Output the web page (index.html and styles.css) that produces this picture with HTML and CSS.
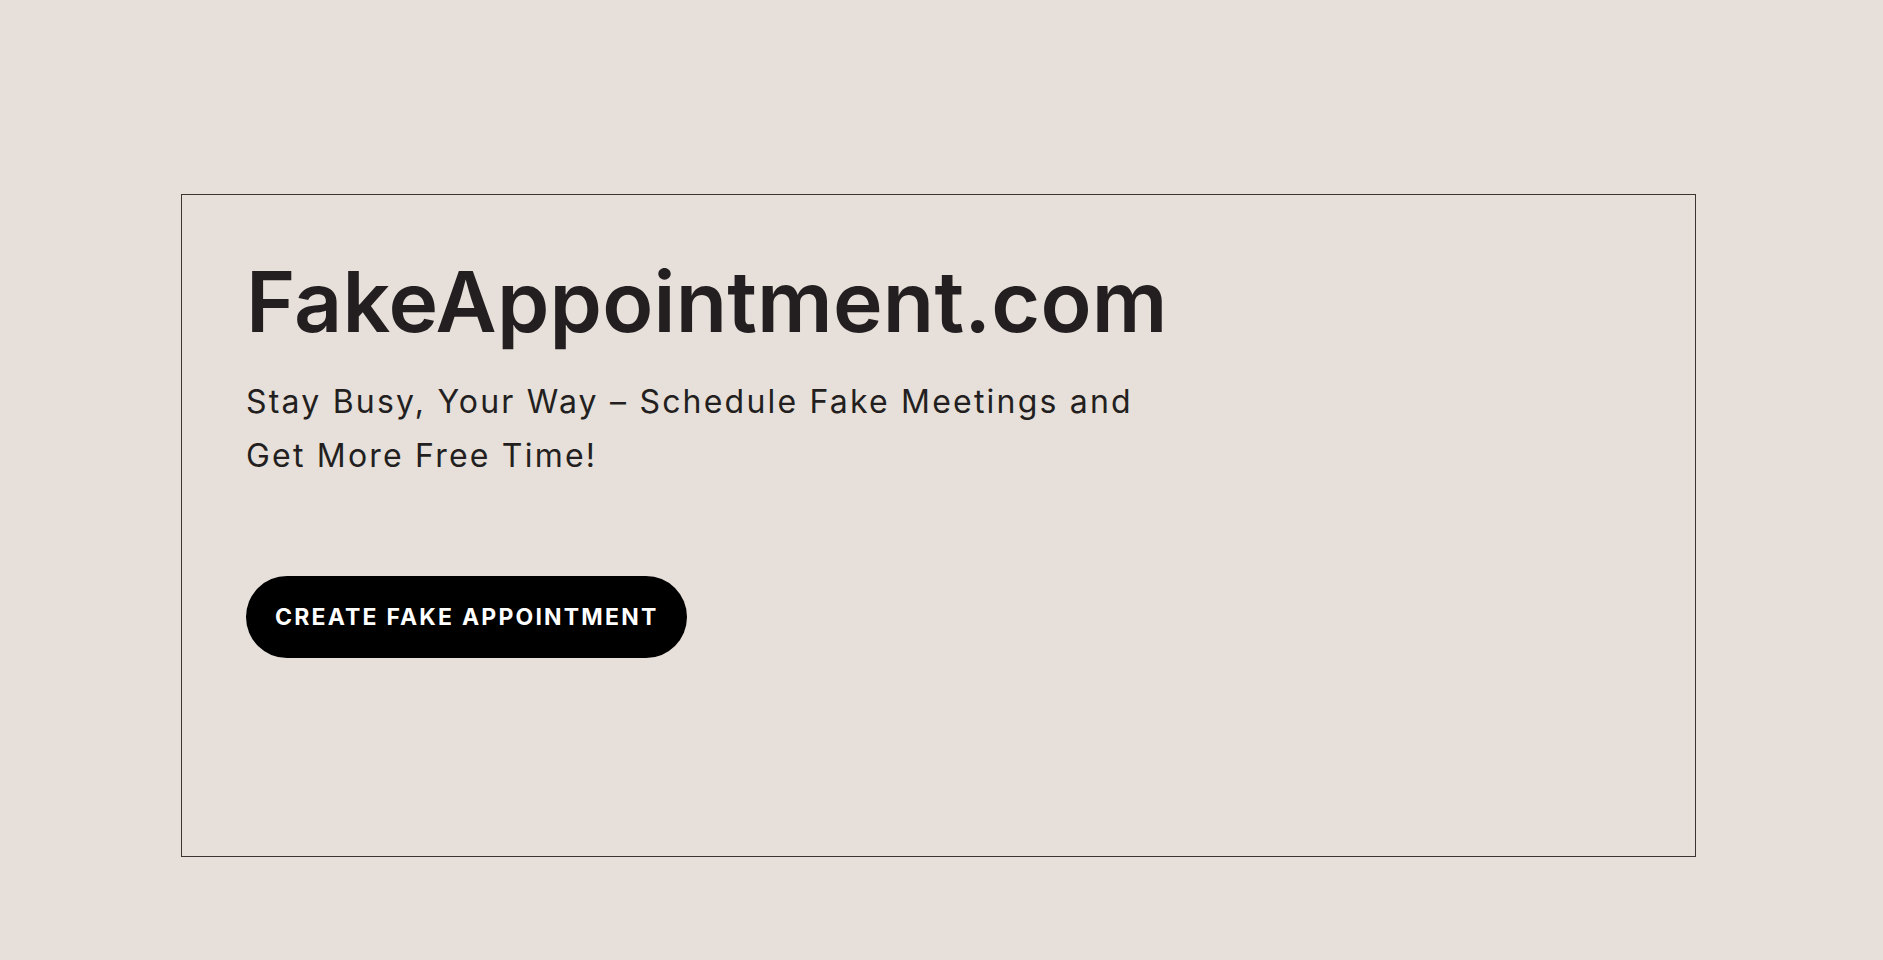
FILE: index.html
```html
<!DOCTYPE html>
<html lang="en">
<head>
<meta charset="utf-8">
<title>FakeAppointment.com</title>
<link rel="stylesheet" href="styles.css">
</head>
<body>
<main class="page">
  <section class="hero">
    <h1 class="hero-title">FakeAppointment.com</h1>
    <p class="hero-sub">Stay Busy, Your Way – Schedule Fake Meetings and Get More Free Time!</p>
    <a class="hero-btn" href="#">CREATE FAKE APPOINTMENT</a>
  </section>
</main>
</body>
</html>
```
FILE: styles.css
```css
html, body {
  margin: 0;
  padding: 0;
  background: #e7dfd9;
}
body {
  font-family: Inter, "Noto Sans", sans-serif;
  color: #231f20;
}
.page {
  padding: 194px 187px 0 181px;
}
.hero {
  border: 1px solid #3a3433;
  padding: 57px 64px 198px 64px;
  display: flex;
  flex-direction: column;
  align-items: flex-start;
}
.hero-title {
  margin: 0;
  font-size: 84px;
  line-height: 1.2;
  font-weight: 600;
  letter-spacing: 0.2px;
}
.hero-sub {
  margin: 22px 0 0 0;
  max-width: 910px;
  font-size: 32px;
  line-height: 54px;
  font-weight: 400;
  letter-spacing: 2.2px;
}
.hero-btn {
  margin-top: 93px;
  display: inline-flex;
  align-items: center;
  height: 82px;
  padding: 0 29px;
  border-radius: 41px;
  background: #000;
  color: #fff;
  text-decoration: none;
  font-size: 23px;
  font-weight: 700;
  letter-spacing: 2.2px;
}
```
